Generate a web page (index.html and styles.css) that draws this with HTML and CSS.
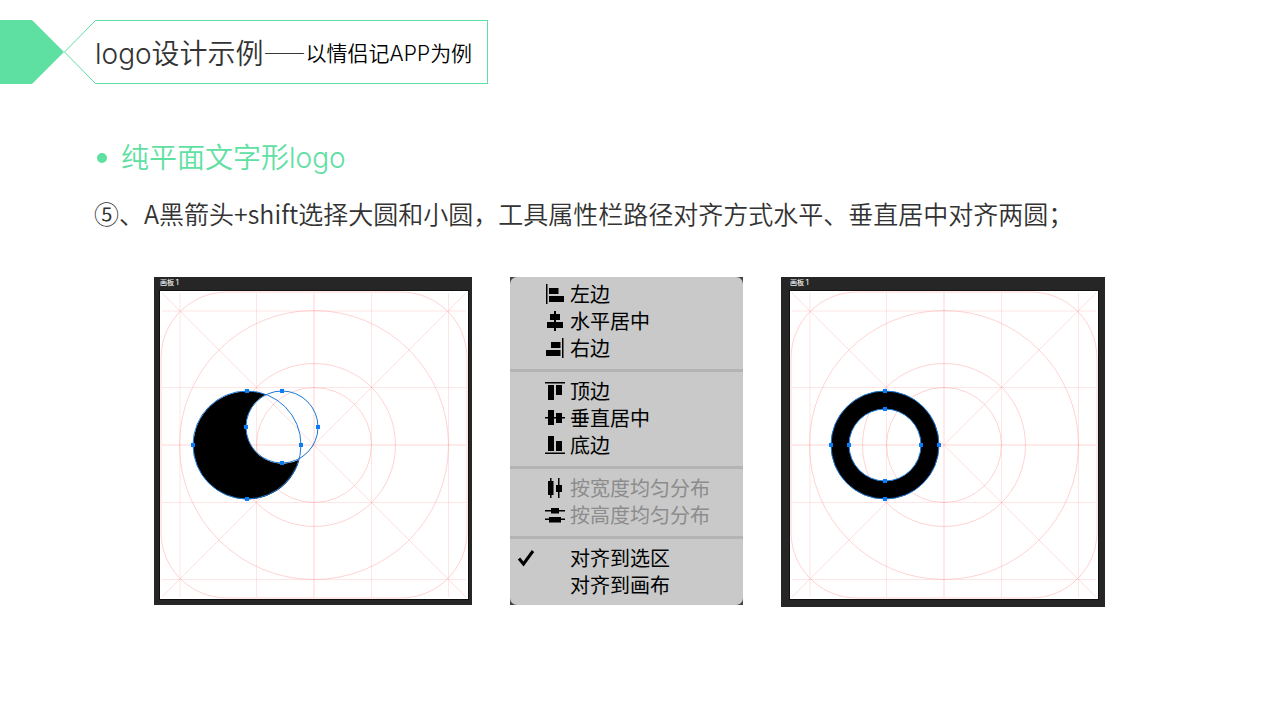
FILE: index.html
```html
<!DOCTYPE html>
<html lang="zh-CN">
<head>
    <meta charset="UTF-8">
    <meta name="viewport" content="width=device-width, initial-scale=1.0">
    <title>logo设计示例</title>
    <link rel="stylesheet" href="styles.css">
</head>
<body>
    <!-- 标题 -->
    <header class="header">
        <div class="arrow"></div>
        <svg class="notch" viewBox="0 0 31 64" aria-hidden="true">
            <path d="M31.500 .5 L.5 32 L31.500 63.500" fill="none" stroke="#5fe0a3"/>
        </svg>
        <h1 class="title">logo设计示例<span class="subtitle">——以情侣记<span class="latin">APP</span>为例</span></h1>
    </header>

    <main>
        <h2 class="section-title">纯平面文字形logo</h2>
        <p class="step">⑤、A黑箭头+shift选择大圆和小圆，工具属性栏路径对齐方式水平、垂直居中对齐两圆；</p>

        <div class="panels">
            <!-- 对齐之前 -->
            <figure class="artboard before">
                <figcaption>画板 1</figcaption>
                <svg class="canvas" viewBox="0 0 308 308">
                    <defs>
                        <g id="grid" fill="none" stroke="#ff8c8c">
                            <g stroke-opacity=".22">
                                <path d="M20 2V306M96.500 2V306M211.500 2V306M288.500 2V306"/>
                                <path d="M2 20H306M2 96.500H306M2 211.500H306M2 288.500H306"/>
                            </g>
                            <path stroke-opacity=".28" d="M2 2L306 306M306 2L2 306"/>
                            <g stroke-opacity=".38">
                                <path d="M154 2V306M2 154H306"/>
                                <circle cx="154" cy="154" r="134.500"/>
                                <circle cx="154" cy="154" r="81.500"/>
                                <circle cx="154" cy="154" r="57.500"/>
                                <rect x="1" y="1" width="306" height="306" rx="66"/>
                            </g>
                        </g>
                    </defs>
                    <use href="#grid"/>
                    <path fill="#000" d="M105.500 103.500A54 54 0 1 0 139.500 168.500A36 36 0 0 1 105.500 103.500Z"/>
                    <g fill="none" stroke="#1a78d6">
                        <circle cx="87" cy="154" r="54"/>
                        <circle cx="122" cy="136" r="36"/>
                    </g>
                    <path fill="#0a7cf5" d="M85 98h4v4h-4zM85 206h4v4h-4zM31 152h4v4h-4zM139 152h4v4h-4zM120 98h4v4h-4zM120 170h4v4h-4zM84 134h4v4h-4zM156 134h4v4h-4z"/>
                </svg>
            </figure>

            <!-- 对齐方式菜单 -->
            <div class="menu-frame">
                <div class="menu" role="menu">
                    <button role="menuitem">
                        <svg viewBox="0 0 20 20"><path d="M1 0h1.500v20H1zM4 4h9.500v6H4zM4 12h15v6H4z"/></svg>左边
                    </button>
                    <button role="menuitem">
                        <svg viewBox="0 0 20 20"><path d="M9 0h2v20H9zM5 3h10v6H5zM2 11h16v6H2z"/></svg>水平居中
                    </button>
                    <button role="menuitem">
                        <svg viewBox="0 0 20 20"><path d="M17 0h1.500v20H17zM6 4h9.500v6H6zM1 12h14.500v6H1z"/></svg>右边
                    </button>
                    <hr>
                    <button role="menuitem">
                        <svg viewBox="0 0 20 20"><path d="M0 1h20v1.500H0zM3 4h6v15H3zM11 4h6v10h-6z"/></svg>顶边
                    </button>
                    <button role="menuitem">
                        <svg viewBox="0 0 20 20"><path d="M0 9h20v1.500H0zM3 2h6v15H3zM11 5h6v10h-6z"/></svg>垂直居中
                    </button>
                    <button role="menuitem">
                        <svg viewBox="0 0 20 20"><path d="M0 17.500h20V19H0zM3 1h6v15H3zM11 6h6v10h-6z"/></svg>底边
                    </button>
                    <hr>
                    <button role="menuitem" disabled>
                        <svg viewBox="0 0 20 20"><path d="M5 0h1.500v20H5zM13 0h1.500v20H13zM3 3h5.500v14H3zM11 7h6v7h-6z"/></svg>按宽度均匀分布
                    </button>
                    <button role="menuitem" disabled>
                        <svg viewBox="0 0 20 20"><path d="M0 5h20v1.500H0zM0 13.500h20V15H0zM6 3h8v5.500H6zM4 12h12v5.500H4z"/></svg>按高度均匀分布
                    </button>
                    <hr>
                    <button role="menuitemradio" aria-checked="true">
                        <svg class="check" viewBox="0 0 20 20"><path d="M3 10.500L7.500 16L17 3"/></svg>对齐到选区
                    </button>
                    <button role="menuitemradio" aria-checked="false">对齐到画布</button>
                </div>
            </div>

            <!-- 对齐之后 -->
            <figure class="artboard after">
                <figcaption>画板 1</figcaption>
                <svg class="canvas" viewBox="0 0 308 308">
                    <use href="#grid"/>
                    <circle cx="95" cy="154" r="45" fill="none" stroke="#000" stroke-width="18"/>
                    <g fill="none" stroke="#1a78d6">
                        <circle cx="95" cy="154" r="54"/>
                        <circle cx="95" cy="154" r="36"/>
                    </g>
                    <path fill="#0a7cf5" d="M93 98h4v4h-4zM93 206h4v4h-4zM39 152h4v4h-4zM147 152h4v4h-4zM93 116h4v4h-4zM93 188h4v4h-4zM57 152h4v4h-4zM129 152h4v4h-4z"/>
                </svg>
            </figure>
        </div>
    </main>
</body>
</html>
```
FILE: styles.css
```css
body {
    margin: 0;
    padding: 20px 0;
    background: #fff;
    color: #333;
    font-family: Inter, "Noto Sans CJK SC", sans-serif;
    font-weight: 350;
}

h1, h2, p, figure {
    margin: 0;
    font-weight: 350;
}

/* 标题 */
.header {
    display: flex;
    height: 64px;
}

.arrow {
    width: 64px;
    background: #5fe0a3;
    clip-path: polygon(0 0, 50% 0, 100% 50%, 50% 100%, 0 100%);
}

.notch {
    width: 31px;
    height: 64px;
}

.title {
    display: flex;
    align-items: center;
    box-sizing: border-box;
    height: 64px;
    padding-right: 15px;
    border: 1px solid #5fe0a3;
    border-left: none;
    font-size: 28px;
    white-space: nowrap;
}

.subtitle {
    color: #000;
    font-family: "Noto Sans CJK SC", sans-serif;
    font-size: 21px;
}

.latin {
    font-family: Inter, sans-serif;
}

/* 正文 */
.section-title {
    display: flex;
    align-items: center;
    gap: 14px;
    margin: 53px 97px 0;
    color: #5fe0a3;
    font-size: 28px;
    line-height: 42px;
}

.section-title::before {
    content: "";
    width: 10px;
    height: 10px;
    border-radius: 50%;
    background: #5fe0a3;
}

.step {
    margin: 16px 94px 0;
    font-family: "Noto Sans CJK SC", sans-serif;
    font-size: 25px;
    line-height: 36px;
}

.panels {
    display: grid;
    grid-template-columns: 318fr 233fr 324fr;
    gap: 38px;
    align-items: start;
    margin: 46px 175px 0 154px;
}

/* 画板 */
.artboard {
    background: #262626;
}

.before {
    padding: 0 4px 6px 6px;
}

.after {
    padding: 0 7px 8px 9px;
}

.artboard figcaption {
    height: 14px;
    color: #eee;
    font-size: 7px;
    font-weight: 500;
    line-height: 12px;
}

.canvas {
    display: block;
    width: 100%;
    background: #fff;
    box-shadow: 0 0 0 1px #111;
}

/* 菜单 */
.menu-frame {
    background: #444;
}

.menu {
    display: flex;
    flex-direction: column;
    padding: 3px 0 7px;
    border-radius: 7px;
    background: #c9c9c9;
}

.menu button {
    position: relative;
    height: 27px;
    padding: 0 0 0 60px;
    border: none;
    background: none;
    color: #000;
    font-family: "Noto Sans CJK SC", sans-serif;
    font-size: 20px;
    font-weight: 400;
    line-height: 27px;
    text-align: left;
}

.menu button:disabled {
    color: #8c8c8c;
}

.menu svg {
    position: absolute;
    top: 4px;
    left: 35px;
    width: 20px;
    height: 20px;
    fill: #000;
}

.menu .check {
    left: 6px;
    fill: none;
    stroke: #000;
    stroke-width: 3;
}

.menu hr {
    width: 100%;
    height: 3px;
    margin: 8px 0 5px;
    border: none;
    background: #b4b4b4;
}
```
